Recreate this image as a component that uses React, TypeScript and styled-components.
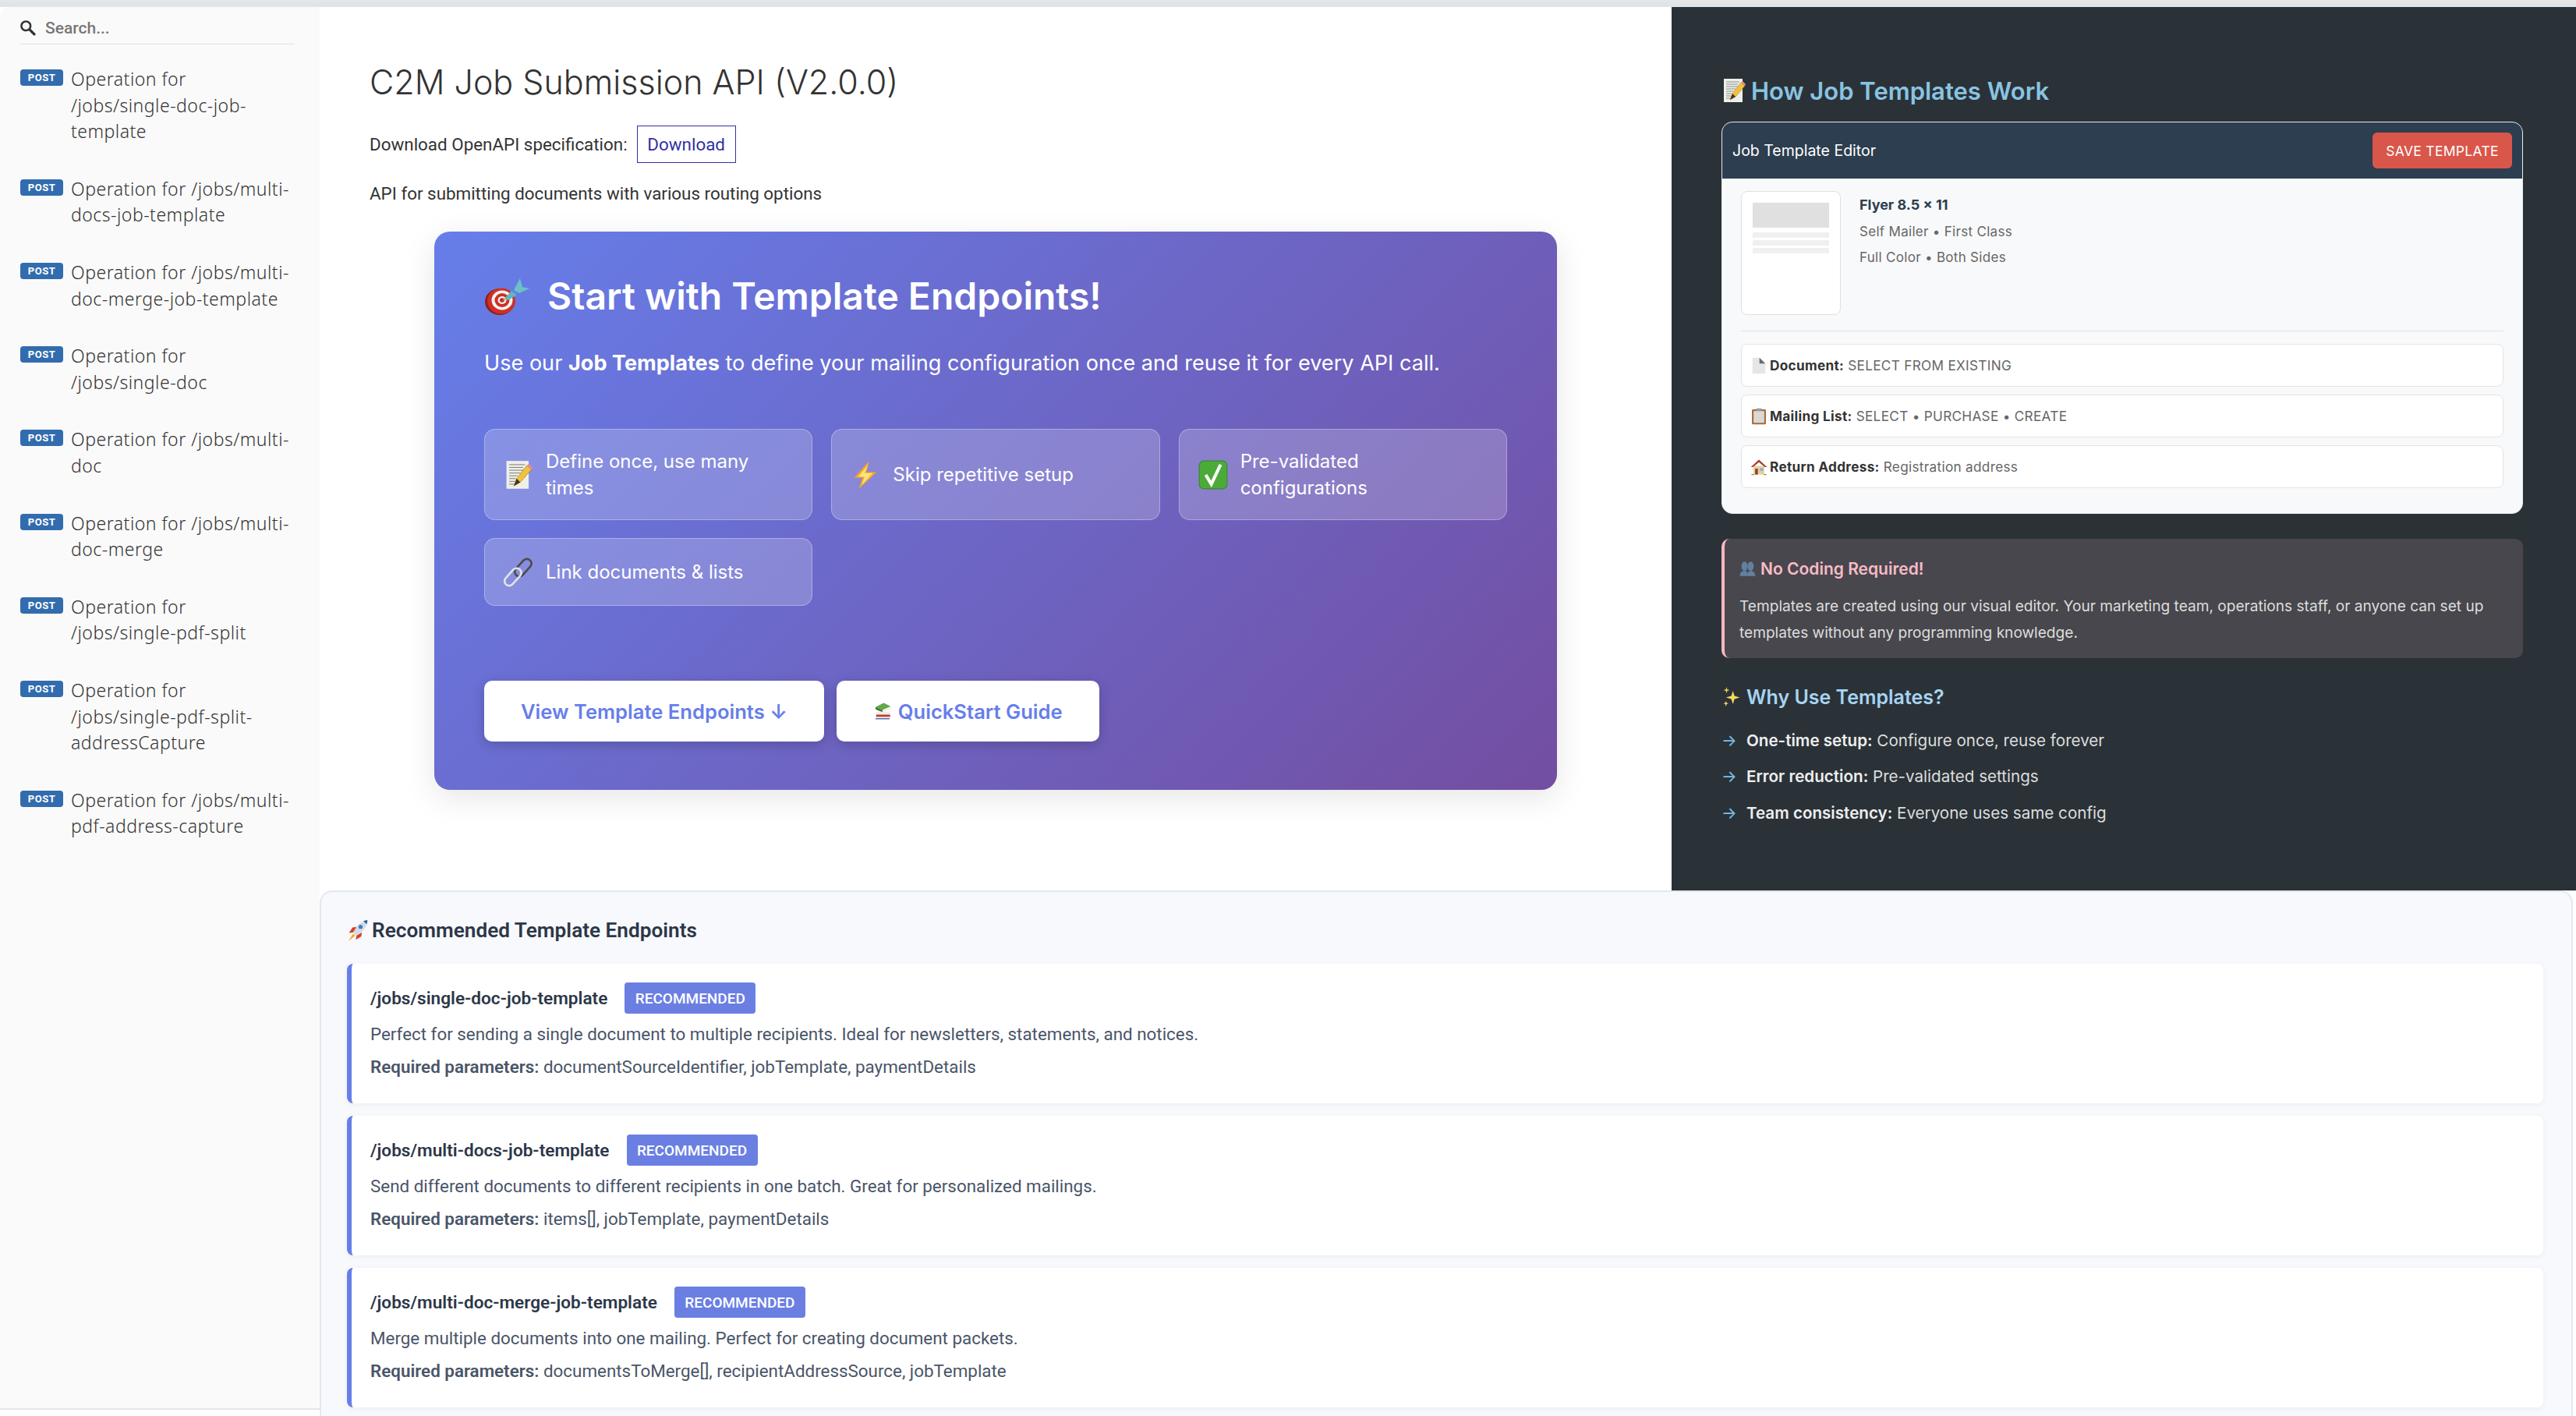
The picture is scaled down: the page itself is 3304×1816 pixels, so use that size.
import React from 'react';
import styled, { createGlobalStyle } from 'styled-components';

const GlobalStyle = createGlobalStyle`
	html, body {
		margin: 0;
		padding: 0;
		background: #ffffff;
	}
	* {
		box-sizing: border-box;
	}
`;

const Page = styled.div`
	width: 3304px;
	height: 1816px;
	overflow: hidden;
	background: #dde5ec;
	display: flex;
	flex-direction: column;
	font-family: 'Roboto', 'Liberation Sans', sans-serif;
`;

const TopStrip = styled.div`
	height: 9px;
	flex: none;
	background: linear-gradient(to bottom, #e6e6e6 0, #e6e6e6 3px, #dde5ec 3px);
`;

const Shell = styled.div`
	flex: 1;
	display: flex;
	min-height: 0;
	background: #ffffff;
`;

const Sidebar = styled.aside`
	width: 410px;
	flex: none;
	background: #fafafa;
	border-top-left-radius: 14px;
	border-bottom: 2px solid #e4e6ea;
	margin-bottom: 8px;
`;

const SearchBox = styled.div`
	margin: 0 32px 0 26px;
	height: 48px;
	display: flex;
	align-items: center;
	gap: 12px;
	border-bottom: 1px solid #e1e1e1;
	color: #777777;
	font-size: 21px;
	font-weight: 500;
	padding-top: 6px;

	svg {
		width: 20px;
		height: 20px;
		fill: #333333;
	}
`;

const NavList = styled.ul`
	list-style: none;
	margin: 8px 0 0;
	padding: 0;
`;

const NavItem = styled.li`
	display: flex;
	padding: 20px 34px 20px 26px;
	font-family: 'Noto Sans', sans-serif;
	font-size: 23px;
	font-weight: 300;
	letter-spacing: 0.5px;
	line-height: 33.6px;
	color: #333333;
`;

const PostBadge = styled.span`
	flex: none;
	width: 55px;
	height: 21px;
	margin: 4px 10px 0 0;
	border-radius: 4px;
	background: #326cae;
	color: #ffffff;
	font-family: 'Roboto', sans-serif;
	font-size: 13px;
	font-weight: 700;
	line-height: 21px;
	text-align: center;
`;

const Column = styled.div`
	flex: 1;
	min-width: 0;
	display: flex;
	flex-direction: column;
`;

const UpperRow = styled.div`
	height: 1133px;
	flex: none;
	display: flex;
`;

const Intro = styled.main`
	flex: 1;
	min-width: 0;
	padding: 0 147px 0 64px;
`;

const ApiTitle = styled.h1`
	margin: 71px 0 0;
	font-family: 'Inter', sans-serif;
	font-size: 43px;
	font-weight: 300;
	line-height: 50px;
	color: #333333;
`;

const DownloadRow = styled.div`
	margin-top: 31px;
	display: flex;
	align-items: center;
	gap: 12px;
	font-size: 22.4px;
	color: #333333;
`;

const DownloadButton = styled.a`
	width: 127px;
	height: 48px;
	display: flex;
	align-items: center;
	justify-content: center;
	border: 1.5px solid #32329f;
	color: #32329f;
`;

const ApiSummary = styled.p`
	margin: 22px 0 0;
	font-size: 22.4px;
	line-height: 34px;
	color: #333333;
`;

const Hero = styled.section`
	margin: 32px 0 0 83px;
	height: 716px;
	padding: 59px 64px 0;
	border-radius: 20px;
	background: linear-gradient(135deg, #667eea 0%, #734ea1 100%);
	box-shadow: 0 10px 40px rgba(0, 0, 0, 0.1);
	color: #ffffff;
	font-family: 'Inter', sans-serif;
`;

const HeroTitle = styled.h2`
	margin: 0;
	display: flex;
	align-items: center;
	gap: 23px;
	height: 48px;
	font-size: 48px;
	font-weight: 600;
	line-height: 48px;
`;

const HeroText = styled.p`
	margin: 42px 0 0;
	font-size: 27.1px;
	line-height: 40px;

	strong {
		font-weight: 700;
	}
`;

const FeatureGrid = styled.div`
	margin-top: 64px;
	display: grid;
	grid-template-columns: repeat(3, 1fr);
	gap: 23px 24px;
`;

const FeatureCard = styled.div`
	display: flex;
	align-items: center;
	gap: 16px;
	padding: 23.5px 24px;
	border: 1.5px solid rgba(255, 255, 255, 0.3);
	border-radius: 14px;
	background: rgba(255, 255, 255, 0.2);
	font-size: 24px;
	line-height: 34px;
`;

const HeroActions = styled.div`
	margin-top: 96px;
	display: flex;
	gap: 16px;
`;

const HeroButton = styled.a`
	height: 78px;
	padding: 0 47px;
	display: flex;
	align-items: center;
	gap: 8px;
	border-radius: 10px;
	background: #ffffff;
	box-shadow: 0 4px 15px rgba(0, 0, 0, 0.2);
	color: #667eea;
	font-size: 25.6px;
	font-weight: 600;
`;

const DarkPanel = styled.aside`
	width: 1160px;
	flex: none;
	padding: 71px 68px 0 64px;
	background: #2a3238;
	font-family: 'Inter', sans-serif;
`;

const PanelTitle = styled.h3`
	margin: 0;
	display: flex;
	align-items: center;
	gap: 6px;
	height: 72px;
	font-size: 31px;
	font-weight: 600;
	color: #89c4e1;
`;

const EditorCard = styled.div`
	margin-top: 4px;
	height: 503px;
	border: 1.5px solid #e6e9ec;
	border-radius: 14px;
	overflow: hidden;
	background: #f8f9fa;
`;

const EditorHeader = styled.div`
	height: 72px;
	padding: 0 13px;
	display: flex;
	align-items: center;
	justify-content: space-between;
	background: #2d3e50;
	color: #ffffff;
	font-size: 19.5px;
`;

const SaveButton = styled.span`
	width: 179px;
	height: 46px;
	display: flex;
	align-items: center;
	justify-content: center;
	border-radius: 6px;
	background: #d9574a;
	font-size: 17.5px;
	letter-spacing: 0.3px;
`;

const EditorBody = styled.div`
	padding: 16px 24px 0;
`;

const FlyerRow = styled.div`
	display: flex;
	gap: 24px;
	padding-bottom: 20px;
	border-bottom: 1.5px solid #dfe2e5;
`;

const FlyerThumb = styled.div`
	width: 128px;
	height: 159px;
	padding: 14px;
	border: 1.5px solid #e0e0e0;
	border-radius: 8px;
	background: #ffffff;
`;

const ThumbBlock = styled.div<{ $tall?: boolean }>`
	height: ${(p) => (p.$tall ? '32px' : '7px')};
	margin-bottom: ${(p) => (p.$tall ? '6px' : '3px')};
	background: ${(p) => (p.$tall ? '#e0e0e0' : '#f0f0f0')};
`;

const FlyerName = styled.div`
	margin-top: 7px;
	font-size: 18px;
	font-weight: 700;
	line-height: 22px;
	color: #2d3e50;
`;

const FlyerMeta = styled.div`
	margin-top: 11.5px;
	font-size: 17px;
	line-height: 22px;
	letter-spacing: 0.3px;
	color: #666666;
`;

const FieldList = styled.div`
	margin-top: 16px;
	display: flex;
	flex-direction: column;
	gap: 10px;
`;

const FieldRow = styled.div`
	height: 55px;
	padding: 0 11px;
	display: flex;
	align-items: center;
	gap: 3px;
	border: 1.5px solid #e4e4e4;
	border-radius: 8px;
	background: #ffffff;
	font-size: 17.2px;
	letter-spacing: 0.3px;
	color: #666666;
	white-space: pre;

	strong {
		color: #333333;
		font-weight: 700;
	}
`;

const CodingNote = styled.div`
	margin-top: 32px;
	height: 153px;
	padding: 21px 20px 0 19px;
	border-left: 4px solid #ffb6c1;
	border-radius: 10px;
	background: #48474d;
`;

const NoteTitle = styled.div`
	display: flex;
	align-items: center;
	gap: 6px;
	height: 34px;
	font-size: 21px;
	font-weight: 600;
	color: #f8bbc6;
`;

const NoteText = styled.p`
	margin: 14px 0 0;
	font-size: 19.1px;
	line-height: 34px;
	color: #dddddd;
`;

const WhyTitle = styled.h4`
	margin: 33px 0 0;
	display: flex;
	align-items: center;
	gap: 6px;
	height: 34px;
	font-size: 25px;
	font-weight: 600;
	color: #a8d4f0;
`;

const WhyList = styled.ul`
	list-style: none;
	margin: 23px 0 0;
	padding: 0;
	display: flex;
	flex-direction: column;
	gap: 16.5px;
`;

const WhyItem = styled.li`
	display: flex;
	align-items: center;
	height: 30px;
	font-size: 20.6px;
	color: #dddddd;
	white-space: pre;

	strong {
		color: #eeeeee;
		font-weight: 600;
	}
`;

const WhyArrow = styled.span`
	width: 32px;
	flex: none;
	color: #7cc0e8;
`;

const Recommended = styled.section`
	flex: 1;
	min-height: 0;
	padding: 26px 36px 0 33px;
	border: 2px solid #e2e8f0;
	border-bottom: 0;
	border-radius: 16px 16px 0 0;
	background: #f8f9fc;
	margin-right: 4px;
`;

const SectionTitle = styled.h3`
	margin: 0;
	display: flex;
	align-items: center;
	gap: 4px;
	height: 46px;
	font-size: 26.2px;
	font-weight: 600;
	color: #2d3748;
`;

const EndpointList = styled.div`
	margin-top: 20px;
	display: flex;
	flex-direction: column;
	gap: 16px;
`;

const EndpointCard = styled.article`
	height: 179px;
	padding: 24px 24px 0;
	border-left: 6px solid #667eea;
	border-radius: 8px;
	background: #ffffff;
	box-shadow: 0 2px 8px rgba(0, 0, 0, 0.05);
`;

const EndpointHead = styled.div`
	display: flex;
	align-items: center;
	gap: 22px;
	height: 40px;
	font-size: 22.6px;
	font-weight: 600;
	color: #2d3748;
`;

const RecBadge = styled.span`
	width: 168px;
	height: 40px;
	display: flex;
	align-items: center;
	justify-content: center;
	border-radius: 4px;
	background: #6b7fe3;
	color: #ffffff;
	font-size: 19px;
	font-weight: 500;
`;

const EndpointText = styled.p`
	margin: 9px 0 0;
	font-size: 22.4px;
	line-height: 34px;
	color: #4a5568;

	& + & {
		margin-top: 8px;
	}

	strong {
		font-weight: 600;
	}
`;

const EmojiBox = styled.svg<{ $size: number }>`
	width: ${(p) => p.$size}px;
	height: ${(p) => p.$size}px;
	flex: none;
`;

type EmojiProps = { size: number };

const Memo = ({ size }: EmojiProps) => (
	<EmojiBox $size={size} viewBox="0 0 32 32">
		<rect x="3" y="1" width="24" height="30" fill="#efefe9" />
		<path d="M6 5h17M6 8h15M6 11h17M6 14h12M6 17h9M6 20h7M6 23h6M6 26h5" stroke="#77776f" strokeWidth="0.8" />
		<path d="M11 28l3-8L25 6l5 4-12 14z" fill="#f2c23e" stroke="#a97a1d" strokeWidth="0.6" />
		<path d="M25 6l5 4 1-2-4-4z" fill="#e78c8c" />
		<path d="M11 28l3-8 4 4z" fill="#40352a" />
	</EmojiBox>
);

const Target = ({ size }: EmojiProps) => (
	<EmojiBox $size={size} viewBox="0 0 58 50">
		<ellipse cx="20" cy="32" rx="19" ry="17" fill="#8f1f1a" />
		<ellipse cx="22" cy="31" rx="18" ry="16.5" fill="#cf2f26" />
		<ellipse cx="23" cy="30" rx="13.5" ry="12.5" fill="#f5f2ee" />
		<ellipse cx="23" cy="30" rx="9.5" ry="9" fill="#cf2f26" />
		<ellipse cx="23" cy="30" rx="5.5" ry="5" fill="#f5f2ee" />
		<ellipse cx="23" cy="30" rx="3" ry="2.8" fill="#b92a22" />
		<path d="M25 29l10-11 7 5-11 7z" fill="#5fb6c4" />
		<path d="M38 17l8-15 3 11 9 2-13 6z" fill="#6cc0c8" />
		<path d="M23 31l4-4 2 2z" fill="#d7b13e" />
	</EmojiBox>
);

const Zap = ({ size }: EmojiProps) => (
	<EmojiBox $size={size} viewBox="0 0 32 32">
		<path d="M20 1L4 19h9L9 31l19-18h-11z" fill="#f7a823" />
		<path d="M19 5L8 18h7l-3 9 12-13h-9z" fill="#ffe27a" />
	</EmojiBox>
);

const Check = ({ size }: EmojiProps) => (
	<EmojiBox $size={size} viewBox="0 0 32 32">
		<rect x="1" y="1" width="30" height="30" rx="5" fill="#4cab38" stroke="#3a8a2b" />
		<path d="M8 16l6 10L24 5" fill="none" stroke="#ffffff" strokeWidth="3.4" />
	</EmojiBox>
);

const LinkEmoji = ({ size }: EmojiProps) => (
	<EmojiBox $size={size} viewBox="0 0 32 32">
		<g fill="none" strokeWidth="2.2" stroke="#dfe5e6">
			<rect x="-5" y="-11" width="10" height="22" rx="5" transform="translate(21 11) rotate(42)" stroke="#4b4b4b" />
			<rect x="-5" y="-11" width="10" height="22" rx="5" transform="translate(10 21) rotate(42)" />
		</g>
	</EmojiBox>
);

const Books = ({ size }: EmojiProps) => (
	<EmojiBox $size={size} viewBox="0 0 32 32">
		<path d="M4 9l14-7 12 6-14 6z" fill="#62a84a" />
		<path d="M4 9l12 5v4L4 13z" fill="#3f7d35" />
		<path d="M16 14l14-6v4l-14 6z" fill="#efefe9" />
		<rect x="5" y="17" width="24" height="5" fill="#f2efe9" />
		<rect x="5" y="22" width="24" height="4" fill="#c43a33" />
		<rect x="6" y="26" width="22" height="4" fill="#f2efe9" />
		<rect x="4" y="28" width="24" height="2" fill="#5975a8" />
	</EmojiBox>
);

const DocEmoji = ({ size }: EmojiProps) => (
	<EmojiBox $size={size} viewBox="0 0 32 32">
		<path d="M4 1h13l11 11v19H4z" fill="#e6e6e6" />
		<path d="M17 1l11 11H17z" fill="#6b6b6b" />
	</EmojiBox>
);

const Clipboard = ({ size }: EmojiProps) => (
	<EmojiBox $size={size} viewBox="0 0 32 32">
		<rect x="3" y="3" width="26" height="28" rx="2" fill="#a86a32" />
		<rect x="6" y="6" width="20" height="22" fill="#d9d9d6" />
		<rect x="11" y="1" width="10" height="5" rx="1" fill="#9a9a9a" />
	</EmojiBox>
);

const House = ({ size }: EmojiProps) => (
	<EmojiBox $size={size} viewBox="0 0 32 32">
		<rect x="6" y="14" width="20" height="16" fill="#e9cf9f" />
		<path d="M16 2L1 16h4L16 7l11 9h4z" fill="#a63a2c" />
		<rect x="9" y="19" width="5" height="11" fill="#8c3f2a" />
		<rect x="18" y="18" width="6" height="5" fill="#7fb2dc" />
		<path d="M2 30h5M25 30h5" stroke="#5aa24a" strokeWidth="2" />
	</EmojiBox>
);

const People = ({ size }: EmojiProps) => (
	<EmojiBox $size={size} viewBox="0 0 32 32">
		<g fill="#62809f">
			<ellipse cx="10" cy="11" rx="6" ry="9" />
			<ellipse cx="22" cy="11" rx="6" ry="9" />
			<path d="M1 30c0-7 3-10 9-10s6 3 6 10zM16 30c0-7 1-10 6-10s9 3 9 10z" />
		</g>
	</EmojiBox>
);

const Sparkles = ({ size }: EmojiProps) => (
	<EmojiBox $size={size} viewBox="0 0 32 32">
		<g fill="#f6d95c">
			<path d="M18 6l2.5 8 8.5 2.5-8.5 2.5-2.5 8-2.5-8-8.5-2.5 8.5-2.5z" />
			<path d="M8 0l1 4 4 1-4 1-1 4-1-4-4-1 4-1z" />
			<path d="M7 22l1 3 3 1-3 1-1 4-1-4-3-1 3-1z" />
		</g>
	</EmojiBox>
);

const Rocket = ({ size }: EmojiProps) => (
	<EmojiBox $size={size} viewBox="0 0 32 32">
		<path d="M11 22l-2-3C13 10 20 3 30 1c0 9-6 16-16 23z" fill="#d5dce3" />
		<path d="M24 2.5c2-1 4-1.3 6-1.5 0 2-.3 4-1 6z" fill="#2f5f9e" />
		<circle cx="20" cy="11" r="3" fill="#3d7fc4" />
		<path d="M9 19l-6 1 5-8 6-1zM14 24l-1 6 8-5 1-6z" fill="#d6402f" />
		<path d="M9 21l3 3-10 8z" fill="#f5a623" />
	</EmojiBox>
);

const SearchIcon = () => (
	<svg viewBox="0 0 1000 1000">
		<path d="M968.2,849.4L667.3,549c83.9-136.5,66.7-317.4-51.7-435.6C477.1-25,252.5-25,113.9,113.4c-138.5,138.3-138.5,362.6,0,501C219.2,730.1,413.2,743,547.6,666.5l301.9,301.4c43.6,40,76.9,14.9,104.2-12.4C981,928.3,1003.9,890.5,968.2,849.4z M524.5,522c-88.9,88.7-233,88.7-321.8,0c-88.9-88.7-88.9-232.6,0-321.3c88.9-88.7,233-88.7,321.8,0C613.4,289.4,613.4,433.3,524.5,522z" />
	</svg>
);

const operations = [
	'/jobs/single-doc-job-template',
	'/jobs/multi-docs-job-template',
	'/jobs/multi-doc-merge-job-template',
	'/jobs/single-doc',
	'/jobs/multi-doc',
	'/jobs/multi-doc-merge',
	'/jobs/single-pdf-split',
	'/jobs/single-pdf-split-addressCapture',
	'/jobs/multi-pdf-address-capture',
];

const endpoints = [
	{
		path: '/jobs/single-doc-job-template',
		text: 'Perfect for sending a single document to multiple recipients. Ideal for newsletters, statements, and notices.',
		params: 'documentSourceIdentifier, jobTemplate, paymentDetails',
	},
	{
		path: '/jobs/multi-docs-job-template',
		text: 'Send different documents to different recipients in one batch. Great for personalized mailings.',
		params: 'items[], jobTemplate, paymentDetails',
	},
	{
		path: '/jobs/multi-doc-merge-job-template',
		text: 'Merge multiple documents into one mailing. Perfect for creating document packets.',
		params: 'documentsToMerge[], recipientAddressSource, jobTemplate',
	},
];

function App() {
	return (
		<Page>
			<GlobalStyle />
			<TopStrip />
			<Shell>
				<Sidebar>
					<SearchBox>
						<SearchIcon />
						Search...
					</SearchBox>
					<NavList>
						{operations.map((op) => (
							<NavItem key={op}>
								<PostBadge>POST</PostBadge>
								<span>Operation for {op}</span>
							</NavItem>
						))}
					</NavList>
				</Sidebar>
				<Column>
					<UpperRow>
						<Intro>
							<ApiTitle>C2M Job Submission API (V2.0.0)</ApiTitle>
							<DownloadRow>
								Download OpenAPI specification:
								<DownloadButton>Download</DownloadButton>
							</DownloadRow>
							<ApiSummary>API for submitting documents with various routing options</ApiSummary>
							<Hero>
								<HeroTitle>
									<Target size={58} />
									Start with Template Endpoints!
								</HeroTitle>
								<HeroText>
									Use our <strong>Job Templates</strong> to define your mailing configuration once and reuse it for every API call.
								</HeroText>
								<FeatureGrid>
									<FeatureCard>
										<Memo size={38} />
										Define once, use many times
									</FeatureCard>
									<FeatureCard>
										<Zap size={38} />
										Skip repetitive setup
									</FeatureCard>
									<FeatureCard>
										<Check size={38} />
										Pre-validated configurations
									</FeatureCard>
									<FeatureCard>
										<LinkEmoji size={38} />
										Link documents &amp; lists
									</FeatureCard>
								</FeatureGrid>
								<HeroActions>
									<HeroButton>View Template Endpoints ↓</HeroButton>
									<HeroButton>
										<Books size={24} />
										QuickStart Guide
									</HeroButton>
								</HeroActions>
							</Hero>
						</Intro>
						<DarkPanel>
							<PanelTitle>
								<Memo size={32} />
								How Job Templates Work
							</PanelTitle>
							<EditorCard>
								<EditorHeader>
									Job Template Editor
									<SaveButton>SAVE TEMPLATE</SaveButton>
								</EditorHeader>
								<EditorBody>
									<FlyerRow>
										<FlyerThumb>
											<ThumbBlock $tall />
											<ThumbBlock />
											<ThumbBlock />
											<ThumbBlock />
										</FlyerThumb>
										<div>
											<FlyerName>Flyer 8.5 x 11</FlyerName>
											<FlyerMeta>Self Mailer • First Class</FlyerMeta>
											<FlyerMeta>Full Color • Both Sides</FlyerMeta>
										</div>
									</FlyerRow>
									<FieldList>
										<FieldRow>
											<DocEmoji size={22} />
											<span>
												<strong>Document:</strong> SELECT FROM EXISTING
											</span>
										</FieldRow>
										<FieldRow>
											<Clipboard size={22} />
											<span>
												<strong>Mailing List:</strong> SELECT • PURCHASE • CREATE
											</span>
										</FieldRow>
										<FieldRow>
											<House size={22} />
											<span>
												<strong>Return Address:</strong> Registration address
											</span>
										</FieldRow>
									</FieldList>
								</EditorBody>
							</EditorCard>
							<CodingNote>
								<NoteTitle>
									<People size={21} />
									No Coding Required!
								</NoteTitle>
								<NoteText>
									Templates are created using our visual editor. Your marketing team, operations staff, or anyone can set up templates without any programming knowledge.
								</NoteText>
							</CodingNote>
							<WhyTitle>
								<Sparkles size={26} />
								Why Use Templates?
							</WhyTitle>
							<WhyList>
								<WhyItem>
									<WhyArrow>→</WhyArrow>
									<span>
										<strong>One-time setup:</strong> Configure once, reuse forever
									</span>
								</WhyItem>
								<WhyItem>
									<WhyArrow>→</WhyArrow>
									<span>
										<strong>Error reduction:</strong> Pre-validated settings
									</span>
								</WhyItem>
								<WhyItem>
									<WhyArrow>→</WhyArrow>
									<span>
										<strong>Team consistency:</strong> Everyone uses same config
									</span>
								</WhyItem>
							</WhyList>
						</DarkPanel>
					</UpperRow>
					<Recommended>
						<SectionTitle>
							<Rocket size={28} />
							Recommended Template Endpoints
						</SectionTitle>
						<EndpointList>
							{endpoints.map((ep) => (
								<EndpointCard key={ep.path}>
									<EndpointHead>
										{ep.path}
										<RecBadge>RECOMMENDED</RecBadge>
									</EndpointHead>
									<EndpointText>{ep.text}</EndpointText>
									<EndpointText>
										<strong>Required parameters:</strong> {ep.params}
									</EndpointText>
								</EndpointCard>
							))}
						</EndpointList>
					</Recommended>
				</Column>
			</Shell>
		</Page>
	);
}

export default App;
